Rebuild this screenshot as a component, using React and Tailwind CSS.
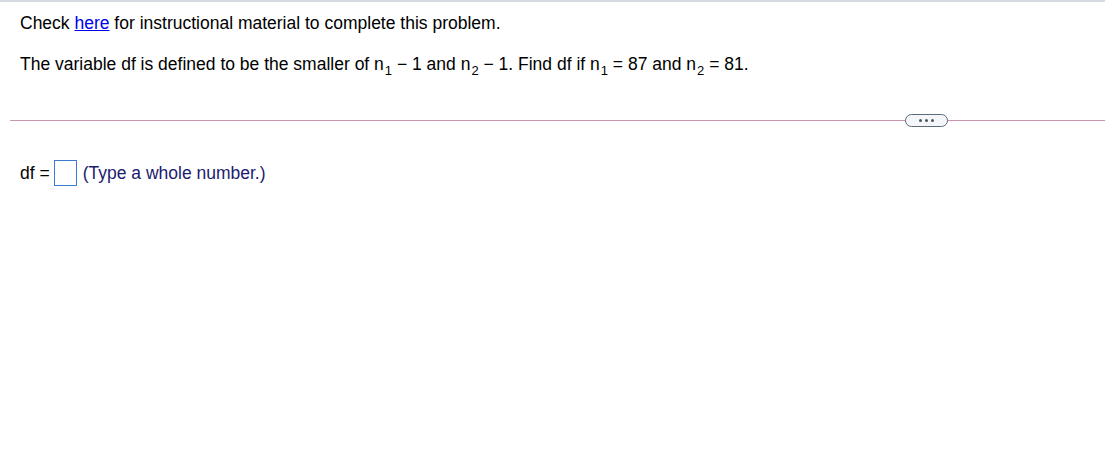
import React from "react";

function Sub({ children }) {
  return <span className="text-[13px] relative top-[5px] ml-[1px]">{children}</span>;
}

export default function App() {
  return (
    <div className="w-[1105px] h-[463px] bg-white border-t-2 border-[#d5dae2] text-[17.5px] text-black" style={{ fontFamily: '"Liberation Sans", Arial, sans-serif' }}>
      <div className="pl-[20px] pt-[11px]">
        <p className="leading-[20px]">
          Check <a href="#" className="text-[#0000ee] underline">here</a> for instructional material to complete this problem.
        </p>
        <p className="leading-[20px] mt-[21px]">
          The variable df is defined to be the smaller of n<Sub>1</Sub> − 1 and n<Sub>2</Sub> − 1. Find df if n<Sub>1</Sub> = 87 and n<Sub>2</Sub> = 81.
        </p>
      </div>

      <div className="relative ml-[10px] mt-[44px] h-px bg-[#c994ad]">
        <button className="absolute left-[895px] top-[-6px] w-[43px] h-[13px] rounded-full border border-[#5b6b7b] bg-[#f4f6f9] flex items-center justify-center gap-[3px]">
          <span className="w-[3px] h-[3px] rounded-full bg-[#4a5560]" />
          <span className="w-[3px] h-[3px] rounded-full bg-[#4a5560]" />
          <span className="w-[3px] h-[3px] rounded-full bg-[#4a5560]" />
        </button>
      </div>

      <div className="flex items-center pl-[20px] mt-[39px]">
        <span>df =</span>
        <span className="ml-[4px] w-[23px] h-[26px] border border-[#3c7bd4] bg-white" />
        <span className="ml-[6px] text-[#1c1c6e]">(Type a whole number.)</span>
      </div>
    </div>
  );
}
